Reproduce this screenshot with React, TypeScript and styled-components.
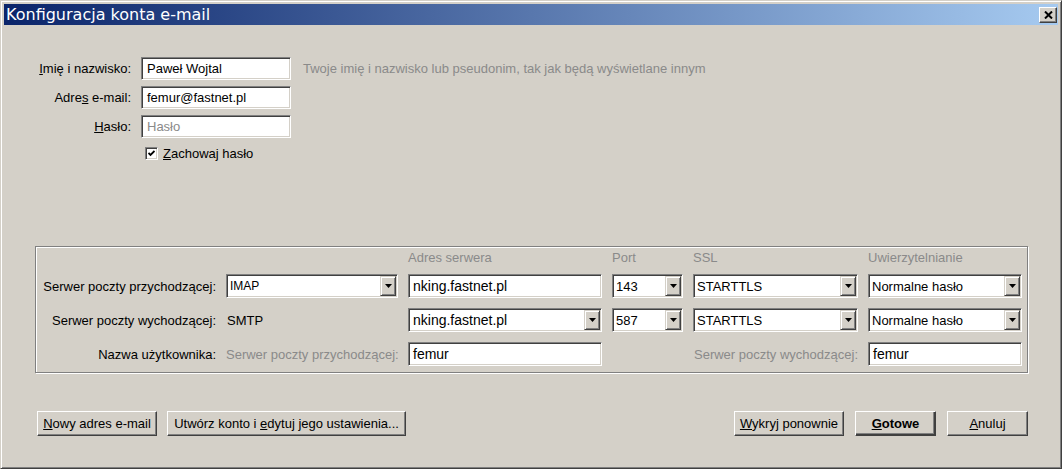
import React from "react";
import styled, { createGlobalStyle } from "styled-components";

const GlobalStyle = createGlobalStyle`
  html, body {
    margin: 0;
    padding: 0;
    background: #ffffff;
  }
  body {
    font-family: "Liberation Sans", Arial, sans-serif;
    font-size: 13px;
    color: #000000;
  }
`;

const Window = styled.div`
  box-sizing: border-box;
  width: 1062px;
  height: 469px;
  background: #d4d0c8;
  border: 1px solid;
  border-color: #d4d0c8 #404040 #404040 #d4d0c8;
  box-shadow: inset 1px 1px 0 #ffffff, inset -1px -1px 0 #808080;
  padding: 3px;
  display: flex;
  flex-direction: column;
`;

const TitleBar = styled.div`
  height: 21px;
  flex-shrink: 0;
  display: flex;
  align-items: center;
  justify-content: space-between;
  padding: 0 1px 0 2px;
  background: linear-gradient(to right, #0a246a, #a6caf0);
  color: #ffffff;
`;

const TitleText = styled.span`
  font-family: "DejaVu Sans", Verdana, sans-serif;
  font-size: 16px;
  line-height: 21px;
`;

const CloseButton = styled.div`
  box-sizing: border-box;
  width: 18px;
  height: 16px;
  display: flex;
  align-items: center;
  justify-content: center;
  background: #d4d0c8;
  border: 1px solid;
  border-color: #ffffff #404040 #404040 #ffffff;
  box-shadow: inset -1px -1px 0 #808080;
`;

const Body = styled.div`
  display: flex;
  flex-direction: column;
  padding: 32px 30px 0 31px;
`;

const TopForm = styled.div`
  display: grid;
  grid-template-columns: 96px 150px auto;
  grid-template-rows: 23px 23px 23px 19px;
  column-gap: 10px;
  row-gap: 6px;
  align-items: center;
`;

const Label = styled.div`
  text-align: right;
  white-space: nowrap;
`;

const Hint = styled.div<{ $align?: "left" | "right" }>`
  color: #8a8a8a;
  white-space: nowrap;
  text-align: ${(p) => p.$align ?? "left"};
`;

const HintBeside = styled(Hint)`
  margin-left: 2px;
`;

const Sunken = styled.div`
  box-sizing: border-box;
  height: 100%;
  background: #ffffff;
  border: 1px solid;
  border-color: #808080 #ffffff #ffffff #808080;
  box-shadow: inset 1px 1px 0 #404040, inset -1px -1px 0 #d4d0c8;
  display: flex;
  align-items: center;
  white-space: nowrap;
  overflow: hidden;
`;

const TextBox = styled(Sunken)<{ $big?: boolean; $placeholder?: boolean }>`
  padding-left: ${(p) => (p.$big ? 4 : 5)}px;
  font-size: ${(p) => (p.$big ? 14 : 13)}px;
  color: ${(p) => (p.$placeholder ? "#8a8a8a" : "#000000")};
`;

const SelectBox = styled(Sunken)`
  padding: 1px;
`;

const SelectValue = styled.div<{ $big?: boolean; $small?: boolean }>`
  flex: 1;
  padding-left: ${(p) => (p.$big ? 3 : 2)}px;
  font-size: ${(p) => (p.$big ? 14 : p.$small ? 12 : 13)}px;
  overflow: hidden;
`;

const DropButton = styled.div`
  box-sizing: border-box;
  width: 16px;
  height: 100%;
  flex-shrink: 0;
  display: flex;
  align-items: center;
  justify-content: center;
  background: #d4d0c8;
  border: 1px solid;
  border-color: #d4d0c8 #404040 #404040 #d4d0c8;
  box-shadow: inset 1px 1px 0 #ffffff, inset -1px -1px 0 #808080;
`;

const CheckRow = styled.div`
  grid-column: 2 / span 2;
  display: flex;
  align-items: center;
  gap: 5px;
  margin-left: 4px;
`;

const CheckBox = styled.div`
  box-sizing: border-box;
  width: 13px;
  height: 13px;
  background: #ffffff;
  border: 1px solid;
  border-color: #808080 #ffffff #ffffff #808080;
  box-shadow: inset 1px 1px 0 #404040, inset -1px -1px 0 #d4d0c8;
  display: flex;
  align-items: center;
  justify-content: center;
`;

const GroupBox = styled.div`
  margin-top: 83px;
  display: grid;
  grid-template-columns: 179px 172px 194px 71px 165px 154px;
  grid-template-rows: 13px 24px 24px 24px;
  column-gap: 10px;
  row-gap: 10px;
  align-items: center;
  padding: 4px 5px 6px 1px;
  border: 1px solid #808080;
  box-shadow: inset 1px 1px 0 #ffffff, 1px 1px 0 #ffffff;
`;

const ColumnHead = styled.div<{ $col: number }>`
  grid-column: ${(p) => p.$col};
  color: #8a8a8a;
  white-space: nowrap;
`;

const PlainValue = styled.div`
  padding-left: 1px;
`;

const ButtonRow = styled.div`
  margin-top: 38px;
  display: flex;
  justify-content: space-between;
  padding-left: 2px;
`;

const ButtonGroup = styled.div<{ $gap: number }>`
  display: flex;
  gap: ${(p) => p.$gap}px;
`;

const Button = styled.div<{ $w: number; $default?: boolean }>`
  box-sizing: border-box;
  width: ${(p) => p.$w}px;
  height: 25px;
  display: flex;
  align-items: center;
  justify-content: center;
  white-space: nowrap;
  background: #d4d0c8;
  border: 1px solid;
  border-color: #ffffff #404040 #404040 #ffffff;
  box-shadow: ${(p) =>
    p.$default
      ? "inset -1px -1px 0 #404040, inset -2px -2px 0 #808080"
      : "inset -1px -1px 0 #808080"};
  font-weight: ${(p) => (p.$default ? "bold" : "normal")};
`;

const Arrow = () => (
  <svg width="7" height="4" viewBox="0 0 7 4">
    <path d="M0 0h7L3.5 4z" fill="#000000" />
  </svg>
);

type SelectProps = {
  value: string;
  big?: boolean;
  small?: boolean;
};

const Select = ({ value, big, small }: SelectProps) => (
  <SelectBox>
    <SelectValue $big={big} $small={small}>
      {value}
    </SelectValue>
    <DropButton>
      <Arrow />
    </DropButton>
  </SelectBox>
);

export default function App() {
  return (
    <>
      <GlobalStyle />
      <Window>
        <TitleBar>
          <TitleText>Konfiguracja konta e-mail</TitleText>
          <CloseButton>
            <svg width="9" height="8" viewBox="0 0 9 8">
              <path
                d="M1 0.5L8 7.5M8 0.5L1 7.5"
                stroke="#000000"
                strokeWidth="2"
              />
            </svg>
          </CloseButton>
        </TitleBar>
        <Body>
          <TopForm>
            <Label>
              <u>I</u>mię i nazwisko:
            </Label>
            <TextBox>Paweł Wojtal</TextBox>
            <HintBeside>
              Twoje imię i nazwisko lub pseudonim, tak jak będą wyświetlane
              innym
            </HintBeside>
            <Label>
              Adre<u>s</u> e-mail:
            </Label>
            <TextBox>femur@fastnet.pl</TextBox>
            <div />
            <Label>
              <u>H</u>asło:
            </Label>
            <TextBox $placeholder>Hasło</TextBox>
            <div />
            <div />
            <CheckRow>
              <CheckBox>
                <svg width="7" height="7" viewBox="0 0 7 7">
                  <path
                    d="M0.5 3L2.5 5L6.5 1"
                    stroke="#000000"
                    strokeWidth="1.8"
                    fill="none"
                  />
                </svg>
              </CheckBox>
              <span>
                <u>Z</u>achowaj hasło
              </span>
            </CheckRow>
          </TopForm>

          <GroupBox>
            <ColumnHead $col={3}>Adres serwera</ColumnHead>
            <ColumnHead $col={4}>Port</ColumnHead>
            <ColumnHead $col={5}>SSL</ColumnHead>
            <ColumnHead $col={6}>Uwierzytelnianie</ColumnHead>

            <Label>Serwer poczty przychodzącej:</Label>
            <Select value="IMAP" small />
            <TextBox $big>nking.fastnet.pl</TextBox>
            <Select value="143" />
            <Select value="STARTTLS" />
            <Select value="Normalne hasło" />

            <Label>Serwer poczty wychodzącej:</Label>
            <PlainValue>SMTP</PlainValue>
            <Select value="nking.fastnet.pl" big />
            <Select value="587" />
            <Select value="STARTTLS" />
            <Select value="Normalne hasło" />

            <Label>Nazwa użytkownika:</Label>
            <Hint $align="right">Serwer poczty przychodzącej:</Hint>
            <TextBox $big>femur</TextBox>
            <div />
            <Hint $align="right">Serwer poczty wychodzącej:</Hint>
            <TextBox $big>femur</TextBox>
          </GroupBox>

          <ButtonRow>
            <ButtonGroup $gap={10}>
              <Button $w={120}>
                <span>
                  <u>N</u>owy adres e-mail
                </span>
              </Button>
              <Button $w={239}>
                <span>
                  Utwórz konto i <u>e</u>dytuj jego ustawienia...
                </span>
              </Button>
            </ButtonGroup>
            <ButtonGroup $gap={11}>
              <Button $w={110}>
                <span>
                  <u>W</u>ykryj ponownie
                </span>
              </Button>
              <Button $w={81} $default>
                <span>
                  <u>G</u>otowe
                </span>
              </Button>
              <Button $w={81}>
                <span>
                  <u>A</u>nuluj
                </span>
              </Button>
            </ButtonGroup>
          </ButtonRow>
        </Body>
      </Window>
    </>
  );
}
